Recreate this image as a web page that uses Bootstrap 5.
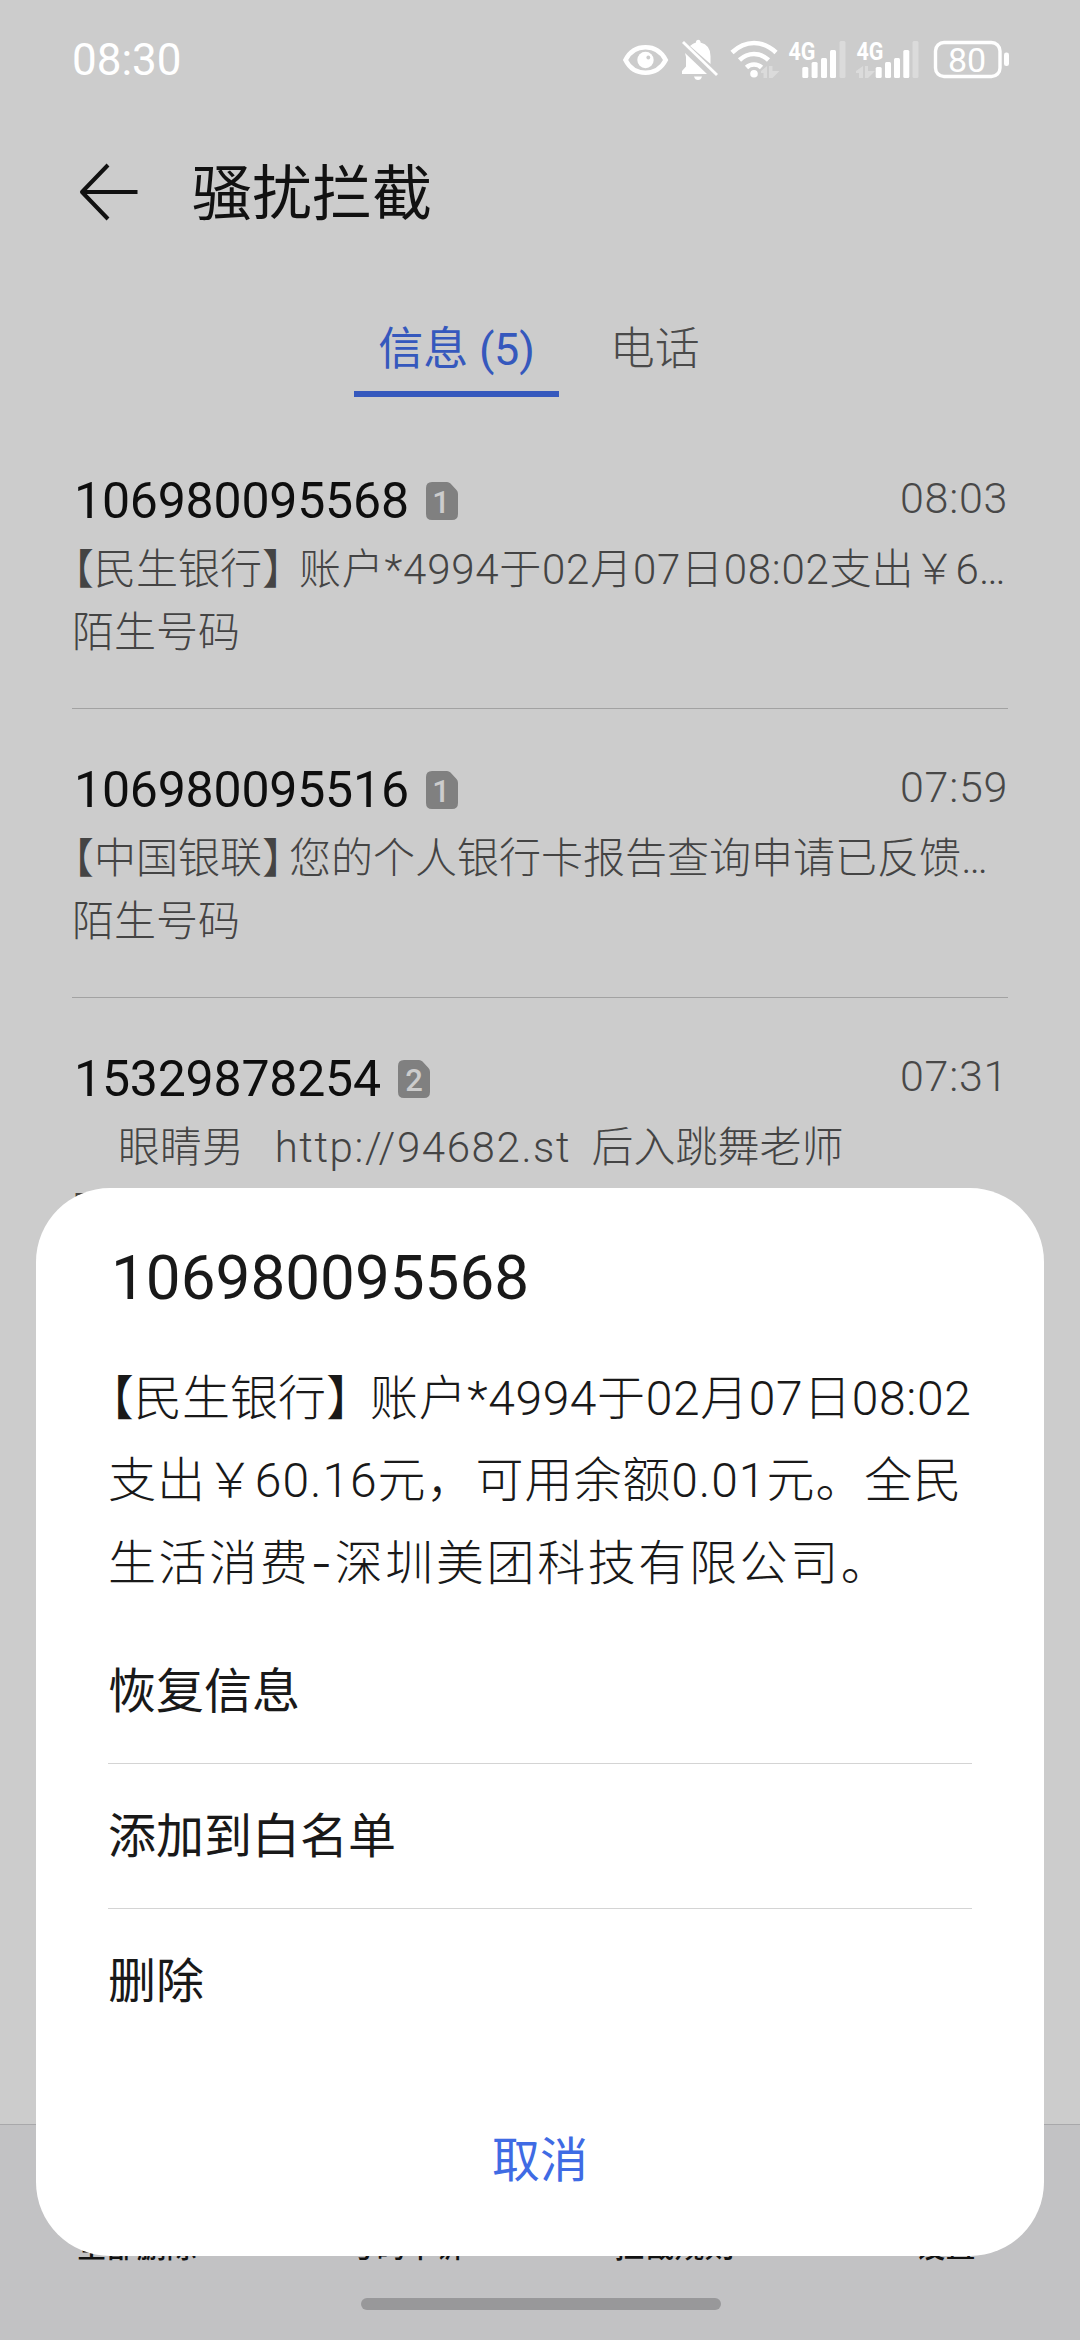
<!DOCTYPE html>
<html lang="zh-CN">
<head>
<meta charset="utf-8">
<meta name="viewport" content="width=device-width, initial-scale=1">
<title>骚扰拦截</title>
<link href="https://cdn.jsdelivr.net/npm/bootstrap@5.3.0/dist/css/bootstrap.min.css" rel="stylesheet">
<script src="https://cdn.jsdelivr.net/npm/bootstrap@5.3.0/dist/js/bootstrap.bundle.min.js" defer></script>
<style>
body{font-family:Roboto,"Noto Sans CJK SC",sans-serif;background:#ccc;color:#111;width:1080px;height:2340px;overflow:hidden}
.status-bar{height:120px;padding:0 70px 0 72px;color:#fff}
.clock{font-size:44px;line-height:60px}
.title-bar{height:144px;padding-left:78px}
.page-title{font-size:60px;line-height:80px;font-weight:400;margin:0 0 0 53px;padding-top:6px}
.tabs{height:156px;gap:27px;padding:29px 2px 0 0}
.tabs .nav-link{height:104px;padding:10px 24px 0;line-height:94px;font-size:45px;border-radius:0;border-bottom:6px solid transparent;color:#4a4a4a;font-weight:300}
.tabs .nav-link.active{color:#3558bd;border-color:#3558bd;font-weight:400;letter-spacing:-.2px}
.msg{height:289px;margin:0 72px;padding-top:43px;border-bottom:1px solid #a2a2a2}
.msg-head{height:76px}
.num{font-size:50px;line-height:76px;color:#0e0e0e;padding-left:2px;letter-spacing:-.2px}
.sim{margin-left:17px}
.time{font-size:43px;line-height:70px;font-weight:300;color:#484848;padding-bottom:7px;letter-spacing:.7px}
.line{font-size:42px;line-height:62px;height:62px;font-weight:300;color:#444;white-space:pre}
.kind{padding-top:1px}
.msg:last-child .kind{padding-top:3px}
.lead-br{margin-left:-20px}
.wide{letter-spacing:.75px;margin-left:-5px}
.tight{margin-left:-15px}
.url{letter-spacing:1.6px}
.tool-bar{left:0;top:2124px;width:1080px;height:216px;background:#c2c2c4;border-top:1px solid #a8a8aa;padding:100px 2px 0}
.tool-bar .item{font-size:30px;line-height:44px;font-weight:500}
.home-pill{left:361px;top:2298px;width:360px;height:12px;border-radius:6px;background:#98989a}
.sheet{left:36px;top:1188px;width:1008px;height:1068px;border-radius:74px;background:#fff;padding:50px 72px 0;color:#191919}
.sheet h2{font-size:62px;line-height:80px;font-weight:400;margin:0;padding-left:3px}
.msg-body{font-size:48px;font-weight:300;padding-top:40px;white-space:nowrap}
.msg-body div{line-height:82.4px;height:82.4px}
.msg-body .b1{margin-left:-22px}
.msg-body .b2{margin-left:-4px;letter-spacing:.6px}
.l2{letter-spacing:.95px}
.l3{letter-spacing:2.6px}
.dash{font-family:Inter;line-height:1}
.act{font-size:48px;line-height:144px;height:145px;font-weight:400;border-bottom:1px solid #d4d4d4;padding-top:1px}
.acts{margin-top:14px}
.act:last-child{border:0}
.cancel{font-size:48px;line-height:70px;color:#3f6be4;margin-top:72px}
</style>
</head>
<body class="position-relative">
<header class="status-bar d-flex align-items-center justify-content-between">
  <span class="clock">08:30</span>
  <svg width="388" height="60" viewBox="622 30 388 60" fill="#fff">
    <path fill="none" stroke="#fff" stroke-width="4.6" d="M625.500 60C630 51 637 47.300 645.500 47.300S661 51 665.700 60C661 69 654 72.700 645.500 72.700S630 69 625.500 60Z"/>
    <circle cx="645.500" cy="60" r="8.200"/><circle cx="648.300" cy="57.500" r="1.900" fill="#ccc"/>
    <path d="M685 53L707 74H682V71L686 66.500V57ZM690 46Q693 43 696 42.500V41.500A2.300 2.300 0 0 1 700.500 41.500V42.500Q710.500 45 710.500 56V64Z"/>
    <path d="M694 76.500H702Q701 80 698 80T694 76.500Z"/><path fill="none" stroke="#fff" stroke-width="2.800" d="M683 42L717 75"/>
    <g fill="none" stroke="#fff" stroke-width="4.600"><path d="M732 52.500Q742 43 754 43T776 52.500M739.500 60Q746 54 754 54T768.500 60M746.500 67.500Q749.500 64.500 754 64.500T761.500 67.500"/></g>
    <circle cx="754" cy="73.700" r="3.800"/>
    <g fill="#fff" opacity=".3"><path d="M761 71L767 66V78H763.500V73H761ZM769 66H772.500V71H779.500L772.500 78H769ZM856 71L863 66V78H859V73H856ZM865 66H868V71H875L868 78H865Z"/></g>
    <g font-family="Roboto" font-weight="700" font-size="26.500"><text x="788.500" y="59.700" textLength="27" lengthAdjust="spacingAndGlyphs">4G</text><text x="856.500" y="59.700" textLength="27" lengthAdjust="spacingAndGlyphs">4G</text></g>
    <g><rect x="802.300" y="67" width="6" height="11" rx="1.500"/><rect x="811.600" y="62" width="6" height="16" rx="1.500"/><rect x="821" y="58" width="6" height="20" rx="1.500"/><rect x="830" y="50" width="6" height="28" rx="1.500"/><rect x="839.500" y="41" width="6" height="37" rx="1.500" opacity=".3"/></g>
    <g><rect x="875.700" y="67" width="6" height="11" rx="1.500"/><rect x="885" y="62" width="6" height="16" rx="1.500"/><rect x="894" y="58" width="6" height="20" rx="1.500"/><rect x="903.300" y="50" width="6" height="28" rx="1.500"/><rect x="912.500" y="41" width="6" height="37" rx="1.500" opacity=".3"/></g>
    <rect x="935.500" y="42.500" width="64.500" height="34" rx="8.500" fill="none" stroke="#fff" stroke-width="3.400"/>
    <rect x="1004" y="52.500" width="5" height="13.500" rx="2.300"/>
    <text x="967" y="71.500" text-anchor="middle" font-family="Roboto" font-size="34">80</text>
  </svg>
</header>
<div class="title-bar d-flex align-items-center">
  <svg width="61" height="60" viewBox="78 162 61 60" fill="none" stroke="#111" stroke-width="4"><path stroke-linejoin="round" d="M108 165L82 192L108 219M82 192H137.500"/></svg>
  <h1 class="page-title">骚扰拦截</h1>
</div>
<nav class="nav tabs justify-content-center">
  <a class="nav-link active">信息 (5)</a>
  <a class="nav-link">电话</a>
</nav>
<main>
  <section class="msg">
    <div class="msg-head d-flex align-items-center">
      <span class="num">106980095568</span>
      <svg class="sim" width="32" height="38" viewBox="0 0 32 38"><path fill="#808080" d="M6 0H21Q23 0 24.500 1.500L30.500 8Q32 9.500 32 12V32Q32 38 26 38H6Q0 38 0 32V6Q0 0 6 0Z"/><text x="15" y="31" text-anchor="middle" font-family="Roboto" font-weight="500" font-size="31" fill="#ccc">1</text></svg>
      <span class="time ms-auto">08:03</span>
    </div>
    <div class="line"><span class="lead-br">【</span>民生银行】<span class="wide">账户*4994于02月07日08:02</span>支出￥6…</div>
    <div class="line kind">陌生号码</div>
  </section>
  <section class="msg">
    <div class="msg-head d-flex align-items-center">
      <span class="num">106980095516</span>
      <svg class="sim" width="32" height="38" viewBox="0 0 32 38"><path fill="#808080" d="M6 0H21Q23 0 24.500 1.500L30.500 8Q32 9.500 32 12V32Q32 38 26 38H6Q0 38 0 32V6Q0 0 6 0Z"/><text x="15" y="31" text-anchor="middle" font-family="Roboto" font-weight="500" font-size="31" fill="#ccc">1</text></svg>
      <span class="time ms-auto">07:59</span>
    </div>
    <div class="line"><span class="lead-br">【</span>中国银联】<span class="tight">您的个人银行卡报告查询申请已反馈…</span></div>
    <div class="line kind">陌生号码</div>
  </section>
  <section class="msg">
    <div class="msg-head d-flex align-items-center">
      <span class="num">15329878254</span>
      <svg class="sim" width="32" height="38" viewBox="0 0 32 38"><path fill="#808080" d="M6 0H21Q23 0 24.500 1.500L30.500 8Q32 9.500 32 12V32Q32 38 26 38H6Q0 38 0 32V6Q0 0 6 0Z"/><text x="16" y="30.500" text-anchor="middle" font-family="Roboto" font-weight="500" font-size="31" fill="#ccc">2</text></svg>
      <span class="time ms-auto">07:31</span>
    </div>
    <div class="line ps-1">　眼睛男   <span class="url">http://94682.st</span>  后入跳舞老师</div>
    <div class="line kind">陌生号码</div>
  </section>
</main>
<footer class="tool-bar position-absolute d-flex text-center">
  <span class="item flex-fill w-25">全部删除</span><span class="item flex-fill w-25">号码申诉</span><span class="item flex-fill w-25">拦截规则</span><span class="item flex-fill w-25 ps-1">设置</span>
</footer>
<div class="home-pill position-absolute"></div>
<div class="sheet position-absolute" role="dialog">
  <h2>106980095568</h2>
  <div class="msg-body">
    <div><span class="b1">【</span>民生银行】<span class="b2">账户*4994于02月07日08:02</span></div>
    <div class="l2">支出￥60.16元，可用余额0.01元。全民</div>
    <div class="l3">生活消费<span class="dash">-</span>深圳美团科技有限公司。</div>
  </div>
  <div class="acts">
    <div class="act">恢复信息</div>
    <div class="act">添加到白名单</div>
    <div class="act">删除</div>
  </div>
  <div class="cancel text-center">取消</div>
</div>
</body>
</html>
